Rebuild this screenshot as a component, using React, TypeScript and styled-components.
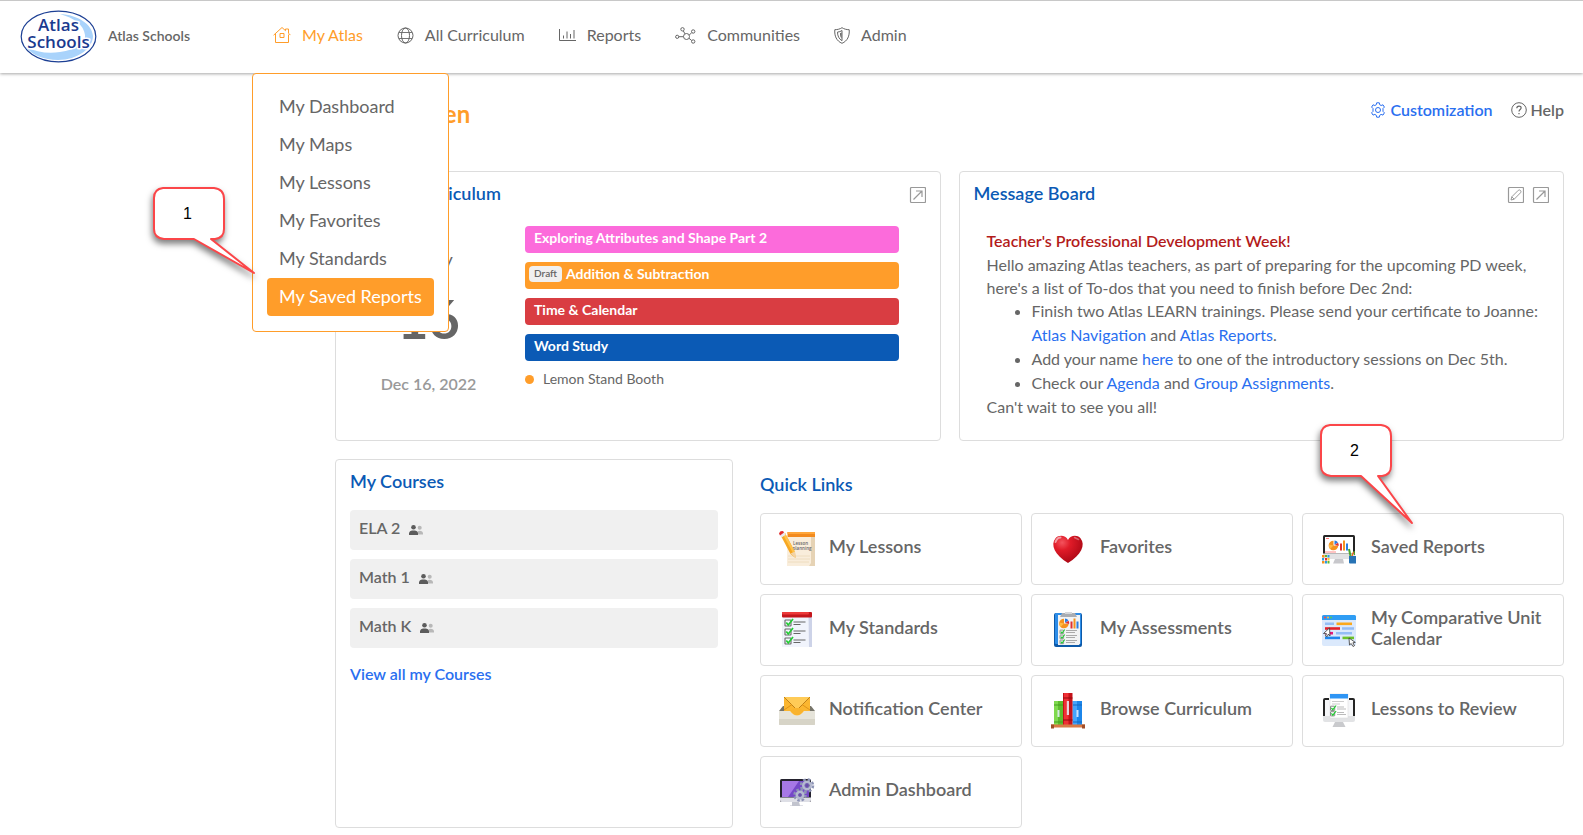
import React from "react";
import styled, { createGlobalStyle } from "styled-components";

const GlobalStyle = createGlobalStyle`
  *, *::before, *::after { box-sizing: border-box; }
  body {
    margin: 0;
    background: #fff;
    color: #666;
    font-family: Lato, "Liberation Sans", sans-serif;
    font-size: 16px;
    line-height: 24px;
  }
  h1, h2, p, ul { margin: 0; padding: 0; }
  a { color: inherit; text-decoration: none; }
  button { font: inherit; color: inherit; background: none; border: 0; padding: 0; cursor: pointer; }
  svg { display: block; flex: none; }
`;

/* ---------- header ---------- */

const Header = styled.header`
  position: relative;
  z-index: 5;
  display: flex;
  height: 73px;
  border-top: 1px solid #c8c8c8;
  background: #fff;
  box-shadow: 0 1px 3px rgba(0, 0, 0, 0.35);
`;

const Brand = styled.a`
  display: flex;
  align-items: center;
  gap: 11px;
  min-width: 252px;
  padding: 0 0 2px 20px;
  font-size: 14px;
  font-weight: 600;
`;

const Nav = styled.nav`
  display: flex;
  gap: 34px;
  padding-left: 21px;
`;

const NavItem = styled.div`
  position: relative;
  display: flex;
`;

const NavLink = styled.a<{ $active?: boolean }>`
  display: flex;
  align-items: center;
  gap: 11px;
  padding-bottom: 4px;
  font-size: 16px;
  white-space: nowrap;
  color: ${(p) => (p.$active ? "#ff9d2a" : "#666")};
`;

const Menu = styled.ul`
  position: absolute;
  top: 100%;
  left: -21px;
  z-index: 6;
  padding: 14px 14px 15px;
  border: 1px solid #ff9d2a;
  border-radius: 4px;
  background: #fff;
  list-style: none;
`;

const MenuLink = styled.a<{ $active?: boolean }>`
  display: block;
  padding: 0 12px 2px;
  border-radius: 4px;
  font-size: 18px;
  line-height: 36px;
  white-space: nowrap;
  background: ${(p) => (p.$active ? "#ff9d2a" : "transparent")};
  color: ${(p) => (p.$active ? "#fff" : "#666")};
`;

/* ---------- page ---------- */

const Main = styled.main`
  display: flex;
  flex-direction: column;
  gap: 18px;
  padding: 25px 19px 7px 335px;
`;

const TitleRow = styled.div`
  display: flex;
  justify-content: space-between;
  align-items: flex-start;
  height: 55px;
`;

const PageTitle = styled.h1`
  color: #ff9d2a;
  font-size: 24px;
  line-height: 32px;
`;

const Actions = styled.div`
  display: flex;
  gap: 18px;
`;

const Action = styled.button<{ $accent?: boolean }>`
  display: flex;
  align-items: center;
  gap: 4px;
  font-weight: 600;
  line-height: 24px;
  color: ${(p) => (p.$accent ? "#2a6ff0" : "#666")};
`;

const TopCards = styled.div`
  display: grid;
  grid-template-columns: 1fr 1fr;
  gap: 18px;
`;

const BottomRow = styled.div`
  display: grid;
  grid-template-columns: minmax(0, 398fr) minmax(0, 804fr);
  gap: 27px;
`;

const Card = styled.section`
  min-height: 270px;
  padding: 9px 14px 14px;
  border: 1px solid #ddd;
  border-radius: 4px;
`;

const CardHead = styled.div`
  display: flex;
  justify-content: space-between;
  align-items: center;
  height: 24px;
`;

const CardTitle = styled.h2`
  color: #0b5ab5;
  font-size: 18px;
  font-weight: 600;
  line-height: 24px;
  white-space: nowrap;
`;

const Tools = styled.div`
  display: flex;
  gap: 8px;
  padding-top: 5px;
  color: #999;
`;

const DayLayout = styled.div`
  display: grid;
  grid-template-columns: 157px 1fr;
  gap: 18px;
  padding: 21px 27px 0 0;
`;

const DayColumn = styled.div`
  display: flex;
  flex-direction: column;
  align-items: center;
  padding-top: 21px;
  font-weight: 600;
`;

const DayName = styled.span`
  font-size: 18px;
  font-weight: 400;
`;

const DayNumber = styled.span`
  padding: 28px 0 33px;
  font-size: 54px;
  font-weight: 700;
  line-height: 40px;
`;

const DateText = styled.span`
  color: #999;
`;

const Units = styled.div`
  display: flex;
  flex-direction: column;
  gap: 9px;
`;

const UnitBar = styled.a<{ $color: string; $tagged?: boolean }>`
  display: flex;
  align-items: center;
  gap: 4px;
  height: 27px;
  padding: 0 9px 3px ${(p) => (p.$tagged ? 4 : 9)}px;
  border-radius: 4px;
  background: ${(p) => p.$color};
  color: #fff;
  font-size: 14px;
  font-weight: 700;
`;

const DraftTag = styled.span`
  height: 16px;
  padding: 0 5px;
  border-radius: 4px;
  background: #f0f0f0;
  color: #666;
  font-size: 10px;
  font-weight: 600;
  line-height: 14px;
`;

const EventLine = styled.a`
  display: flex;
  align-items: center;
  gap: 9px;
  font-size: 14px;
  line-height: 18px;
`;

const Dot = styled.span`
  width: 9px;
  height: 9px;
  border-radius: 50%;
  background: #ff9d2a;
`;

const Message = styled.div`
  padding: 24px 4px 0 13px;
`;

const MessageTitle = styled.p`
  color: #b31b1b;
  font-weight: 600;
`;

const MessageText = styled.p`
  line-height: 23px;
`;

const MessageList = styled.ul`
  padding-left: 45px;
`;

const TextLink = styled.a`
  color: #2a6ff0;
`;

const CourseList = styled.div`
  display: flex;
  flex-direction: column;
  gap: 9px;
  padding: 17px 0 14px;
`;

const Course = styled.a`
  display: flex;
  align-items: center;
  gap: 9px;
  height: 40px;
  padding: 0 9px 5px;
  border-radius: 4px;
  background: #f0f0f0;
  font-weight: 600;
`;

const ViewAll = styled.a`
  color: #2a6ff0;
  font-weight: 600;
`;

const QuickLinks = styled.section`
  padding-top: 13px;
`;

const QuickGrid = styled.div`
  display: grid;
  grid-template-columns: repeat(3, minmax(0, 1fr));
  gap: 9px;
  padding-top: 17px;
`;

const QuickLink = styled.div`
  position: relative;
`;

const QuickAnchor = styled.a`
  display: flex;
  align-items: center;
  gap: 14px;
  height: 72px;
  padding: 0 18px;
  border: 1px solid #ddd;
  border-radius: 4px;
  font-size: 18px;
  font-weight: 600;
  line-height: 21px;
`;

const QuickLabel = styled.span`
  padding-bottom: 5px;
`;

/* ---------- numbered callouts ---------- */

const CalloutBox = styled.div<{ $left: number; $top: number }>`
  position: absolute;
  left: ${(p) => p.$left}px;
  top: ${(p) => p.$top}px;
  z-index: 8;
  pointer-events: none;
`;

const CalloutNumber = styled.span`
  position: absolute;
  left: 0;
  top: 0;
  width: 69px;
  color: #000;
  font: 16px/54px "Liberation Sans", Arial, sans-serif;
  text-align: center;
`;

const CalloutShape = styled.svg`
  overflow: visible;
`;

function Callout({ n, left, top, tipX, tipY }: { n: number; left: number; top: number; tipX: number; tipY: number }) {
  return (
    <CalloutBox $left={left} $top={top}>
      <CalloutShape width="110" height="115" viewBox="0 0 110 115">
        <path
          d={`M10 1H61Q71 2 71 12V42Q71 51 62 52H58L${tipX} ${tipY}L41 52H11Q1 51 1 42V11Q1 2 10 1Z`}
          fill="#fff"
          stroke="#fb4649"
          strokeWidth="2"
          strokeLinejoin="round"
          filter="drop-shadow(-1px 4px 3px rgba(0,0,0,.5))"
        />
      </CalloutShape>
      <CalloutNumber>{n}</CalloutNumber>
    </CalloutBox>
  );
}

/* ---------- drawings ---------- */

const Logo = () => (
  <svg width="77" height="53" viewBox="0 0 77 53" role="img" aria-label="Atlas Schools">
    <ellipse cx="38.500" cy="26.500" rx="37.300" ry="25.300" fill="#fff" stroke="#1c3f94" strokeWidth="1.200" />
    <path d="M40 4C58 5 72 14 73 26C73 38 58 50 38 50C24 50 12 45 6 37C16 42 28 44 40 42C56 40 66 33 65 25C64 15 54 8 40 4Z" fill="#a9d3fb" />
    <g
      fontFamily="'Open Sans', 'Noto Sans', sans-serif"
      fontWeight="600"
      fill="#1a3a8f"
      stroke="#fff"
      strokeWidth="3"
      strokeLinejoin="round"
      paintOrder="stroke"
      textAnchor="middle"
      fontSize="17"
    >
      <text x="38.500" y="21">Atlas</text>
      <text x="38.500" y="38">Schools</text>
    </g>
  </svg>
);

const line = { fill: "none", stroke: "currentColor", strokeWidth: 1 } as const;

const HouseIcon = () => (
  <svg width="18" height="18" viewBox="0 0 18 18" {...line}>
    <path d="M.6 9.200 9 1.500l3.500 3.200V3H15.500v4.200l1.900 1.900M2.500 8v8.500h13V8.500M7 7.500h4v4H7z" />
  </svg>
);
const GlobeIcon = () => (
  <svg width="17" height="17" viewBox="0 0 17 17" {...line}>
    <circle cx="8.500" cy="8.500" r="7.500" />
    <ellipse cx="8.500" cy="8.500" rx="4" ry="7.500" />
    <path d="M2 5.500h13M2 11.500h13" strokeWidth=".9" />
  </svg>
);
const ChartIcon = () => (
  <svg width="17" height="14" viewBox="0 0 17 14" {...line}>
    <path d="M.5 1v11.500H17M4.500 10.500v-3M8 10.500v-7M11.500 10.500V6M15 10.500V2" />
  </svg>
);
const NetworkIcon = () => (
  <svg width="21" height="17" viewBox="0 0 21 17" {...line}>
    <circle cx="11.500" cy="9.500" r="3" />
    <circle cx="7.500" cy="2.300" r="1.700" />
    <circle cx="18.200" cy="4.500" r="1.700" />
    <circle cx="2.200" cy="9.800" r="1.600" />
    <circle cx="18.200" cy="14.500" r="1.700" />
    <path d="m8.300 3.900 1.700 3M14.200 8.200l2.500-2.600M3.900 9.700h4.600M14 11.300l2.700 2.200" />
  </svg>
);
const ShieldIcon = () => (
  <svg width="16" height="17" viewBox="0 0 16 17" {...line}>
    <path d="M8 .7C6 2 3.500 2.700.8 2.700.3 9 2.500 14 8 16.300 13.500 14 15.700 9 15.200 2.700 12.500 2.700 10 2 8 .7Z" />
    <path d="M8 3.500C6.700 4.400 5.200 5 3.500 5.100 3.500 9 5 12 8 13.700Z" />
    <path d="M7.600 5.500v6C6.500 10.500 6 8.500 6 6.200Z" fill="currentColor" stroke="none" />
  </svg>
);
const GearIcon = () => (
  <svg width="16" height="16" viewBox="0 0 16 16" {...line} strokeLinejoin="round">
    <path d="M6.700.8h2.600l.4 1.900 1.400.8 1.900-.7 1.400 2.300-1.400 1.400v2.900l1.400 1.400-1.400 2.300-1.900-.7-1.400.9-.4 1.900H6.700l-.4-1.900-1.400-.9-1.900.7-1.400-2.300L3 9.400V6.500L1.600 5.100 3 2.800l1.900.7 1.400-.8z" />
    <circle cx="8" cy="8" r="2.500" />
  </svg>
);
const HelpIcon = () => (
  <svg width="16" height="16" viewBox="0 0 16 16" {...line}>
    <circle cx="8" cy="8" r="7.300" />
    <path d="M5.800 6.200C5.900 3.300 10.300 3.500 10.100 6 10 7.400 8 7.600 8 9.500M8 11v1.300" strokeWidth="1.200" />
  </svg>
);
const ExpandIcon = () => (
  <svg width="17" height="17" viewBox="0 0 17 17" {...line}>
    <rect x="1.500" y=".5" width="15" height="15" rx="1" strokeWidth="1.200" />
    <path d="m4.500 12.500 8.500-8.500M7 4h6v6" strokeWidth="1.200" />
  </svg>
);
const EditIcon = () => (
  <svg width="17" height="17" viewBox="0 0 17 17" {...line}>
    <rect x="1.500" y=".5" width="15" height="15" rx="1" strokeWidth="1.200" />
    <path d="m4 13 .8-3.200 6.500-6.500q1.300-.8 2.200.2t.1 2.200L7.200 12.200Zm.8-3.200 2.400 2.400" />
  </svg>
);

const People = styled.svg`
  margin-top: 4px;
`;
const PeopleIcon = () => (
  <People width="14" height="10" viewBox="0 0 14 10">
    <g fill="#b8b8b8">
      <circle cx="10.700" cy="2.700" r="2" />
      <path d="M8 9.500V7.500Q8.500 5.700 10.500 5.700 13.800 5.700 14 8.500V9.500Z" />
    </g>
    <g fill="#5c5c5c">
      <circle cx="4.500" cy="2.300" r="2.300" />
      <path d="M0 10V8Q.5 5.500 3 5.500H6Q8.500 5.500 9 8V10Z" />
    </g>
  </People>
);

const art = { width: 36, height: 36, viewBox: "0 0 36 36", "aria-hidden": true } as const;

const LessonsArt = () => (
  <svg {...art}>
    <path d="M9 6h27v29H8.500z" fill="#e6d3b5" />
    <path d="M8.500 6H32v26l-2 3H8z" fill="#f9eddb" />
    <path d="M9 25h22M9 28h22M9 31h21" stroke="#ecd9ba" strokeWidth=".8" />
    <path d="M8.500 1H36v5H8.500z" fill="#f28a1e" />
    <path d="M8.500 1H36v2H8.500z" fill="#ffa63a" />
    <g fontFamily="'Open Sans', sans-serif" fontSize="4.500" fill="#666">
      <text x="14" y="13.500">Lesson</text>
      <text x="13.500" y="18.500">planning</text>
    </g>
    <path d="m2 5 4-3 10 19 .5 6-5-4z" fill="#f7a823" />
    <path d="m4 3.500 2-1.500 10 19-2 1z" fill="#ffc24a" />
    <path d="m11.500 22.500 4.500-2 .5 6.500z" fill="#f3d3a4" />
    <path d="m1 4 4-3.200 1.600 3L2.700 6.500z" fill="#e8eaf0" />
    <path d="M0 2.500Q1-.5 4.200.2L5 1.600 1 4.500z" fill="#e32b2b" />
  </svg>
);
const Tick = ({ x, y, s = 1 }: { x: number; y: number; s?: number }) => (
  <g transform={`translate(${x} ${y}) scale(${s})`} fill="none">
    <rect x="0" y="1" width="6" height="6" rx=".6" stroke="#666" strokeWidth="1.100" />
    <path d="m1.300 3.500 2 2.500L8 0" stroke="#2c3" strokeWidth="1.700" />
  </g>
);
const StandardsArt = () => (
  <svg {...art}>
    <path d="M4 4h29v31H3z" fill="#cdd3e8" />
    <path d="M4 4h25.500L30 35H3z" fill="#f1f4fc" />
    <rect x="3" y="0" width="30" height="5.500" rx="1" fill="#c4161c" />
    <rect x="3" y="0" width="27" height="2.500" rx="1" fill="#ec3a3a" />
    {[7, 16, 25].map((y) => (
      <g key={y}>
        <Tick x={6} y={y} />
        <path d={`M14.500 ${y + 3}h12M14.500 ${y + 5.5}h7`} stroke="#666" strokeWidth="1.100" />
      </g>
    ))}
  </svg>
);
const MailArt = () => (
  <svg {...art}>
    <path d="M0 18 4 13h28l4 5z" fill="#77756a" />
    <path d="M5 4h26v14H5z" fill="#fbb630" />
    <path d="M5 4h26L18 17z" fill="#ffcb57" />
    <path d="M5 4 18 17 31 4" fill="none" stroke="#b97913" strokeWidth=".9" />
    <path d="M5 17 13 11.500M31 17l-8-5.500" stroke="#e09417" />
    <path d="M0 18h11q7 9 14 0h11v12.500q0 1.500-1.500 1.500h-33Q0 32 0 30.500z" fill="#e6e4da" />
    <path d="M11 18q7 9 14 0l-5-3h-4z" fill="#f9b32d" />
    <path d="M0 26h36v6H0z" fill="#d0cdbf" opacity=".7" />
  </svg>
);
const Cog = ({ x, y, r }: { x: number; y: number; r: number }) => (
  <g transform={`translate(${x} ${y})`} fill="none">
    <circle r={r} stroke="#8d94b5" strokeWidth="2.500" strokeDasharray={`${r * 0.45} ${r * 0.335}`} />
    <circle r={r - 2.3} stroke="#b4b9d0" strokeWidth="2.600" />
    <circle r={r - 4} fill="#694cab" stroke="#7e84a8" strokeWidth=".5" />
  </g>
);
const AdminArt = () => (
  <svg {...art}>
    <rect x="1" y="5" width="31" height="23" rx="1.500" fill="#24222e" />
    <path d="M3 7h27v16H3z" fill="#7549c8" />
    <path d="M3 7h17L9 23H3z" fill="#a678e6" />
    <path d="M1 23.500h31v2.500q0 2-1.500 2h-28Q1 28 1 26z" fill="#dedfe6" />
    <path d="M13 28h7l1 3.500h3V32H11v-.5h2z" fill="#c2c4ce" />
    <Cog x={28} y={11.5} r={6} />
    <Cog x={21} y={21} r={5.5} />
  </svg>
);
const HeartArt = () => (
  <svg {...art}>
    <defs>
      <radialGradient id="heart" cx=".3" cy=".25" r=".8">
        <stop offset="0" stopColor="#f4535d" />
        <stop offset=".35" stopColor="#e01b28" />
        <stop offset="1" stopColor="#a90714" />
      </radialGradient>
    </defs>
    <path d="M18 9C20.500 4 27 3.500 30.500 7.200 36 14 31 24 18 32 5 24 0 14 5.500 7.200 9 3.500 15.500 4 18 9Z" fill="url(#heart)" />
    <path d="M5.500 11q1.500-4.500 5-4.500" stroke="#fff" strokeWidth="2" strokeLinecap="round" fill="none" opacity=".55" />
    <path d="m24.500 6.500 4 2" stroke="#fff" strokeWidth="1.500" strokeLinecap="round" opacity=".35" />
  </svg>
);
const Stats = ({ x, y }: { x: number; y: number }) => (
  <g transform={`translate(${x} ${y})`}>
    <path d="M4.500 5V.2A4.800 4.800 0 1 0 9.200 5.500z" fill="#f5921e" />
    <path d="M4.500 5 1 8.500Q-.5 6 0 4z" fill="#ffba45" />
    <path d="M5.500 4.300V0A4.500 4.500 0 0 1 9 2z" fill="#2a7de1" />
    <path d="M5.500 4.500 9 2.300Q10 3.500 9.600 5.500z" fill="#e03131" />
    <path d="M11 3h2v7h-2z" fill="#e03131" />
    <path d="M14 0h2v10h-2z" fill="#f5921e" />
    <path d="M17 3h2v7h-2z" fill="#2a7de1" />
  </g>
);
const AssessArt = () => (
  <svg {...art}>
    <rect x="4" y="1" width="28" height="34" rx="2" fill="#0d59a8" />
    <rect x="5" y="1" width="26" height="31" rx="1" fill="#2d8de8" />
    <path d="M8 3h22v28.500L29 33H8z" fill="#f2f3f4" />
    <path d="M12 1h13l2 4H10z" fill="#a9adb3" />
    <path d="M15 0h7v2h-7z" fill="#d5d7da" />
    <Stats x={9.5} y={6.5} />
    {[17.5, 22.5, 27.5].map((y) => (
      <g key={y}>
        <Tick x={10} y={y} s={0.6} />
        <path d={`M16 ${y + 1}h11M16 ${y + 3}h9`} stroke="#aaa" />
      </g>
    ))}
  </svg>
);
const BooksArt = () => (
  <svg {...art}>
    <path d="M4 8h9v24H4z" fill="#5dbb2f" />
    <path d="M4 8h4v24H4z" fill="#7fd94e" />
    <path d="M22.500 8H32v24h-9.500z" fill="#1c86ea" />
    <path d="M23 8h4v24h-4z" fill="#45a5fb" />
    <path d="M13 0h9.500v32H13z" fill="#c5121a" />
    <path d="M14 0h4.500v32H14z" fill="#ef3035" />
    <path d="M4 12h9M4 29h9" stroke="#459c1e" />
    <path d="M23 12h9M23 29h9" stroke="#1268bf" />
    <path d="M13 5h9.500M13 27h9.500" stroke="#95090f" />
    <path d="M7.500 17h2v7h-2zM26.500 17h2v7h-2zM16.800 8h2.200v14h-2.200z" fill="#e8f1ff" opacity=".85" />
    <path d="M1 31.500h34v3H1z" fill="#d97a45" />
    <path d="M1 31.500h3v4H1zM32 31.500h3v4h-3z" fill="#a14f2a" />
  </svg>
);
const ReportsArt = () => (
  <svg {...art}>
    <rect x="2" y="4" width="32" height="23" rx="1.500" fill="#242424" />
    <path d="M4 6h28v16.500H4z" fill="#fff" />
    <path d="M5 7.500h3" stroke="#f77" />
    <Stats x={8} y={9.5} />
    <path d="M4 21h11" stroke="#f88" />
    <path d="M2 22.500h32V26q0 2-2 2H4q-2 0-2-2z" fill="#e2e2e4" />
    <path d="M14 28h8l1 4.500H12z" fill="#c8c8cc" />
    <path d="m28 18 1.500 7" stroke="#4aa62c" strokeWidth="2" />
    <path d="M33.500 24l-.5-4" stroke="#4aa62c" strokeWidth="1.200" />
    <path d="m31 25 1.500-4" stroke="#e8641e" strokeWidth="1.300" />
    <path d="M28 25h7v7.500h-6q-1 0-1-1z" fill="#2773b5" />
    <path d="M1 24h2.500v2.500H1zM1 30h2.500v2.500H1z" fill="#f5921e" />
    <path d="M4 24h2v2H4zM6.500 30h2v2.500h-2z" fill="#5dbb2f" />
    <path d="M6.500 24h2v2.500h-2zM1 27h2v2.500H1zM4 30h2v2.500H4z" fill="#2a9de1" />
    <path d="M4 27h2v2.500H4z" fill="#e03131" />
    <path d="M6.500 27h2v2.500h-2z" fill="#f7c52e" />
  </svg>
);
const CalendarArt = () => (
  <svg {...art}>
    <rect x="1" y="3" width="34" height="31" rx="2" fill="#dbe9fc" />
    <path d="M1 8V4.500Q1 3 2.500 3h31Q35 3 35 4.500V8z" fill="#2f9df4" />
    <circle cx="4" cy="5.500" r="1" fill="#f44" />
    <circle cx="7" cy="5.500" r="1" fill="#fb3" />
    <circle cx="10" cy="5.500" r="1" fill="#5c5" />
    <g strokeWidth="2.600" fill="none">
      <path d="M4 11.800h9M21 16.500h12M15 21.200h16" stroke="#94bdf5" />
      <path d="M15.500 11.800H31" stroke="#fba81c" />
      <path d="M4 16.500h15" stroke="#e3202b" />
      <path d="M4 21.200h8" stroke="#e6197a" />
      <path d="M4 25.900h15" stroke="#1f86ee" />
      <path d="M21.500 25.900H33" stroke="#6cc22a" />
    </g>
    <path d="m8.500 16-6 5.500 3 .2L4.500 24l1.700.6 1.200-2.500L9 24z" fill="#fff" stroke="#333" strokeWidth=".8" />
    <path d="m28 26 .5 7 1.700-1.500 1.800 3 1.500-.8-1.600-2.900 2.400-.4z" fill="#fff" stroke="#333" strokeWidth=".8" />
  </svg>
);
const ReviewArt = () => (
  <svg {...art}>
    <path d="M8 5H4Q2 5 2 7v16h32V7q0-2-2-2h-4v3h4v15H4V8h4z" fill="#242424" />
    <path d="M4 7h28v17H4z" fill="#f5f6f8" />
    <path d="M2 23h32v4q0 2-2 2H4q-2 0-2-2z" fill="#e2e3e5" />
    <path d="M14 29h8l2.500 5h-13z" fill="#c9cacd" />
    <path d="M9 1h18v24H9z" fill="#fff" stroke="#ddd" strokeWidth=".6" />
    <path d="M9 1h18v4.500H9z" fill="#2f95f4" />
    <path d="M11 8.500h12M11 11h8" stroke="#ccc" />
    <Tick x={9.5} y={12.5} s={0.7} />
    <Tick x={9.5} y={18} s={0.7} />
    <path d="M16 14h7M16 16h9M16 19.500h7M16 21.500h9" stroke="#bbb" />
  </svg>
);

const quickLinks = [
  { label: "My Lessons", Art: LessonsArt },
  { label: "Favorites", Art: HeartArt },
  { label: "Saved Reports", Art: ReportsArt, callout: true },
  { label: "My Standards", Art: StandardsArt },
  { label: "My Assessments", Art: AssessArt },
  { label: "My Comparative Unit Calendar", Art: CalendarArt },
  { label: "Notification Center", Art: MailArt },
  { label: "Browse Curriculum", Art: BooksArt },
  { label: "Lessons to Review", Art: ReviewArt },
  { label: "Admin Dashboard", Art: AdminArt },
];

const menuItems = ["My Dashboard", "My Maps", "My Lessons", "My Favorites", "My Standards", "My Saved Reports"];

const navItems = [
  { label: "All Curriculum", Icon: GlobeIcon },
  { label: "Reports", Icon: ChartIcon },
  { label: "Communities", Icon: NetworkIcon },
  { label: "Admin", Icon: ShieldIcon },
];

export default function App() {
  return (
    <>
      <GlobalStyle />
      <Header>
        <Brand href="#">
          <Logo />
          Atlas Schools
        </Brand>
        <Nav>
          <NavItem>
            <NavLink href="#" $active>
              <HouseIcon />
              My Atlas
            </NavLink>
            <Menu>
              {menuItems.map((item) => (
                <li key={item}>
                  <MenuLink href="#" $active={item === "My Saved Reports"}>
                    {item}
                  </MenuLink>
                </li>
              ))}
              <Callout n={1} left={-100} top={113} tipX={101} tipY={86} />
            </Menu>
          </NavItem>
          {navItems.map(({ label, Icon }) => (
            <NavItem key={label}>
              <NavLink href="#">
                <Icon />
                {label}
              </NavLink>
            </NavItem>
          ))}
        </Nav>
      </Header>

      <Main>
        <TitleRow>
          <PageTitle>Hello, Tarren</PageTitle>
          <Actions>
            <Action $accent>
              <GearIcon />
              Customization
            </Action>
            <Action>
              <HelpIcon />
              Help
            </Action>
          </Actions>
        </TitleRow>

        <TopCards>
          <Card>
            <CardHead>
              <CardTitle>Today's Curriculum</CardTitle>
              <Tools>
                <button aria-label="Open curriculum">
                  <ExpandIcon />
                </button>
              </Tools>
            </CardHead>
            <DayLayout>
              <DayColumn>
                <DayName>Friday</DayName>
                <DayNumber>16</DayNumber>
                <DateText>Dec 16, 2022</DateText>
              </DayColumn>
              <Units>
                <UnitBar href="#" $color="#fc6bdb">Exploring Attributes and Shape Part 2</UnitBar>
                <UnitBar href="#" $color="#ff9d2a" $tagged>
                  <DraftTag>Draft</DraftTag>
                  Addition &amp; Subtraction
                </UnitBar>
                <UnitBar href="#" $color="#d93d42">Time &amp; Calendar</UnitBar>
                <UnitBar href="#" $color="#0b5ab5">Word Study</UnitBar>
                <EventLine href="#">
                  <Dot />
                  Lemon Stand Booth
                </EventLine>
              </Units>
            </DayLayout>
          </Card>

          <Card>
            <CardHead>
              <CardTitle>Message Board</CardTitle>
              <Tools>
                <button aria-label="Edit message">
                  <EditIcon />
                </button>
                <button aria-label="Open message board">
                  <ExpandIcon />
                </button>
              </Tools>
            </CardHead>
            <Message>
              <MessageTitle>Teacher's Professional Development Week!</MessageTitle>
              <MessageText>
                Hello amazing Atlas teachers, as part of preparing for the upcoming PD week, here's a list of To-dos that
                you need to finish before Dec 2nd:
              </MessageText>
              <MessageList>
                <li>
                  Finish two Atlas LEARN trainings. Please send your certificate to Joanne:{" "}
                  <TextLink href="#">Atlas Navigation</TextLink> and <TextLink href="#">Atlas Reports</TextLink>.
                </li>
                <li>
                  Add your name <TextLink href="#">here</TextLink> to one of the introductory sessions on Dec 5th.
                </li>
                <li>
                  Check our <TextLink href="#">Agenda</TextLink> and <TextLink href="#">Group Assignments</TextLink>.
                </li>
              </MessageList>
              <MessageText>Can't wait to see you all!</MessageText>
            </Message>
          </Card>
        </TopCards>

        <BottomRow>
          <Card>
            <CardTitle>My Courses</CardTitle>
            <CourseList>
              {["ELA 2", "Math 1", "Math K"].map((course) => (
                <Course href="#" key={course}>
                  {course}
                  <PeopleIcon />
                </Course>
              ))}
            </CourseList>
            <ViewAll href="#">View all my Courses</ViewAll>
          </Card>

          <QuickLinks>
            <CardTitle>Quick Links</CardTitle>
            <QuickGrid>
              {quickLinks.map(({ label, Art, callout }) => (
                <QuickLink key={label}>
                  <QuickAnchor href="#">
                    <Art />
                    <QuickLabel>{label}</QuickLabel>
                  </QuickAnchor>
                  {callout && <Callout n={2} left={18} top={-89} tipX={92} tipY={99} />}
                </QuickLink>
              ))}
            </QuickGrid>
          </QuickLinks>
        </BottomRow>
      </Main>
    </>
  );
}
